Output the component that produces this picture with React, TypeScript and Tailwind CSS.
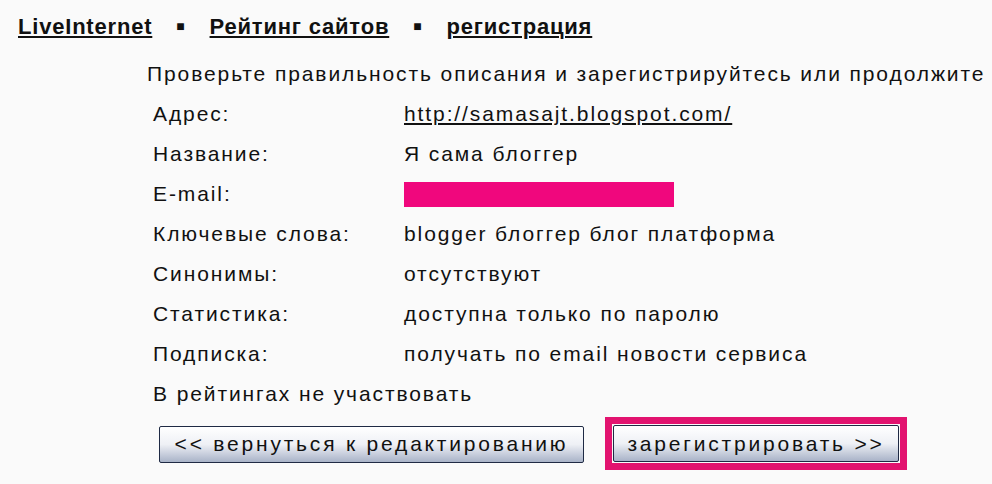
import React from 'react'

const rows: Array<{ label: string; value: React.ReactNode }> = [
  { label: 'Адрес:', value: <span className="underline underline-offset-2">http://samasajt.blogspot.com/</span> },
  { label: 'Название:', value: 'Я сама блоггер' },
  { label: 'E-mail:', value: <span className="block w-[270px] h-[25px] bg-[#f0077d]" /> },
  { label: 'Ключевые слова:', value: 'blogger блоггер блог платформа' },
  { label: 'Синонимы:', value: 'отсутствуют' },
  { label: 'Статистика:', value: 'доступна только по паролю' },
  { label: 'Подписка:', value: 'получать по email новости сервиса' },
]

const btn =
  'h-full w-full border border-[#1f2a44] rounded-[2px] bg-gradient-to-b from-white via-[#eef0f5] to-[#a9b3c8] text-[21px] tracking-[2.8px] text-[#111] whitespace-nowrap'

export default function App() {
  return (
    <div className="w-[992px] h-[484px] bg-[#fafafa] text-[#111] font-['Liberation_Sans',Arial,sans-serif] overflow-hidden">
      <div className="flex items-center h-[52px] pl-[18px] text-[22px] font-bold tracking-[0.8px]">
        <span className="underline underline-offset-2 decoration-2">LiveInternet</span>
        <span className="mx-[24px] text-[14px]">■</span>
        <span className="underline underline-offset-2 decoration-2">Рейтинг сайтов</span>
        <span className="mx-[24px] text-[14px]">■</span>
        <span className="underline underline-offset-2 decoration-2">регистрация</span>
      </div>

      <div className="pl-[147px] text-[21px] tracking-[1.9px]">
        <div className="h-[44px] flex items-center whitespace-nowrap">
          Проверьте правильность описания и зарегистрируйтесь или продолжите
        </div>
        <div className="pl-[6px] -mt-[2px]">
          {rows.map((r) => (
            <div key={r.label} className="grid grid-cols-[251px_1fr] h-[40px] items-center whitespace-nowrap">
              <div>{r.label}</div>
              <div>{r.value}</div>
            </div>
          ))}
          <div className="h-[40px] flex items-center">В рейтингах не участвовать</div>
        </div>

        <div className="flex items-center gap-[21px] pl-[12px] mt-[3px]">
          <div className="w-[425px] h-[37px] mt-[1px]">
            <button className={btn}>&lt;&lt; вернуться к редактированию</button>
          </div>
          <div className="w-[302px] h-[53px] border-[7px] border-[#e2136f] p-[1px]">
            <button className={btn}>зарегистрировать &gt;&gt;</button>
          </div>
        </div>
      </div>
    </div>
  )
}
